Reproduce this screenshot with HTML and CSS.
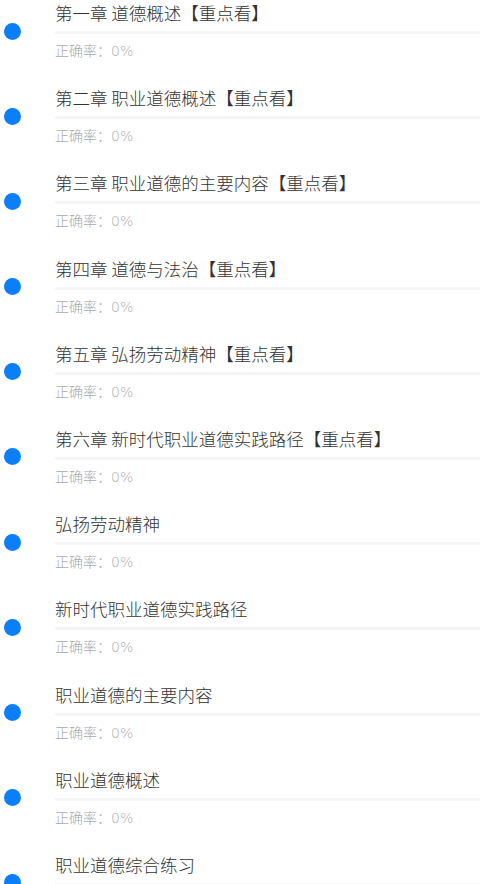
FILE: index.html
```html
<!DOCTYPE html>
<html lang="zh-CN">
<head>
<meta charset="utf-8">
<title>章节练习</title>
<link rel="stylesheet" href="styles.css">
</head>
<body>
<ul class="list">
  <li class="item"><span class="dot"></span><div class="body"><div class="title">第一章 道德概述【重点看】</div><div class="bar"></div><div class="rate">正确率：0%</div></div></li>
  <li class="item"><span class="dot"></span><div class="body"><div class="title">第二章 职业道德概述【重点看】</div><div class="bar"></div><div class="rate">正确率：0%</div></div></li>
  <li class="item"><span class="dot"></span><div class="body"><div class="title">第三章 职业道德的主要内容【重点看】</div><div class="bar"></div><div class="rate">正确率：0%</div></div></li>
  <li class="item"><span class="dot"></span><div class="body"><div class="title">第四章 道德与法治【重点看】</div><div class="bar"></div><div class="rate">正确率：0%</div></div></li>
  <li class="item"><span class="dot"></span><div class="body"><div class="title">第五章 弘扬劳动精神【重点看】</div><div class="bar"></div><div class="rate">正确率：0%</div></div></li>
  <li class="item"><span class="dot"></span><div class="body"><div class="title">第六章 新时代职业道德实践路径【重点看】</div><div class="bar"></div><div class="rate">正确率：0%</div></div></li>
  <li class="item"><span class="dot"></span><div class="body"><div class="title">弘扬劳动精神</div><div class="bar"></div><div class="rate">正确率：0%</div></div></li>
  <li class="item"><span class="dot"></span><div class="body"><div class="title">新时代职业道德实践路径</div><div class="bar"></div><div class="rate">正确率：0%</div></div></li>
  <li class="item"><span class="dot"></span><div class="body"><div class="title">职业道德的主要内容</div><div class="bar"></div><div class="rate">正确率：0%</div></div></li>
  <li class="item"><span class="dot"></span><div class="body"><div class="title">职业道德概述</div><div class="bar"></div><div class="rate">正确率：0%</div></div></li>
  <li class="item"><span class="dot"></span><div class="body"><div class="title">职业道德综合练习</div><div class="bar"></div><div class="rate">正确率：0%</div></div></li>
</ul>
</body>
</html>
```
FILE: styles.css
```css
html, body {
  margin: 0;
  padding: 0;
  background: #ffffff;
  font-family: "Noto Sans CJK SC", "Noto Sans", sans-serif;
  overflow: hidden;
}
.list {
  list-style: none;
  margin: 0;
  padding: 0;
}
.item {
  display: flex;
  height: 85.2px;
}
.dot {
  flex: none;
  width: 17px;
  height: 17px;
  border-radius: 50%;
  background: #0a7ff9;
  margin: 22.5px 34px 0 4px;
}
.body {
  flex: 1;
  min-width: 0;
}
.title {
  font-size: 17.5px;
  font-weight: 300;
  line-height: 25px;
  color: #333333;
  white-space: nowrap;
}
.bar {
  height: 3px;
  margin-top: 6px;
  background: #f4f4f4;
}
.rate {
  margin-top: 7px;
  font-family: "DejaVu Sans", "Noto Sans CJK SC", sans-serif;
  font-size: 14px;
  font-weight: 300;
  line-height: 20px;
  color: #aaaaaa;
}
```
